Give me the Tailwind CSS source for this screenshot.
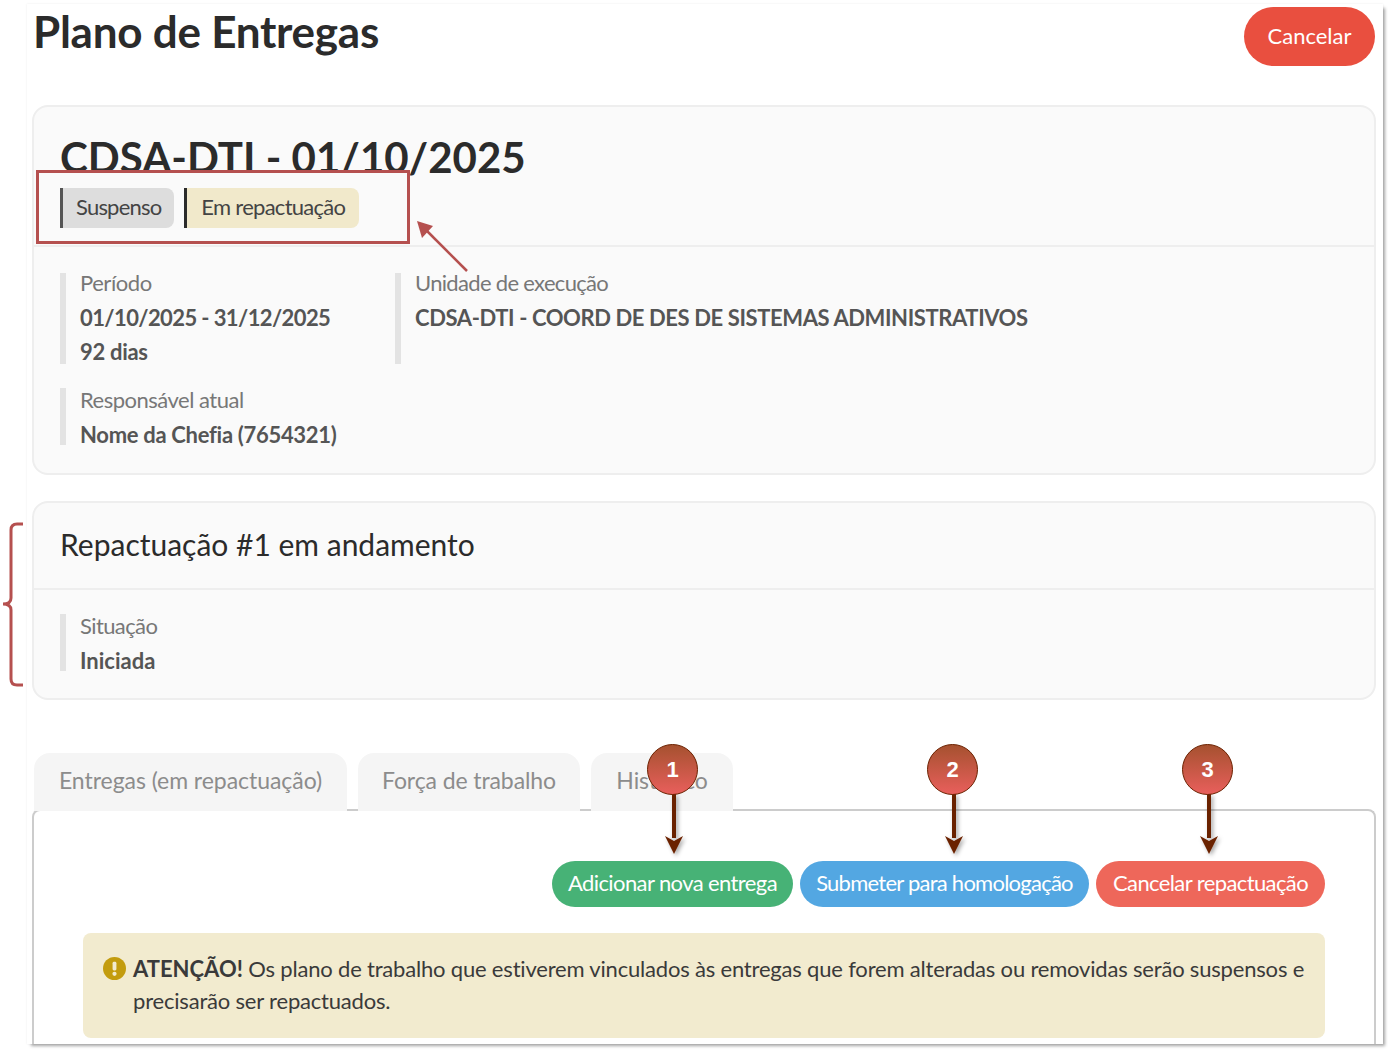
<!DOCTYPE html>
<html lang="pt-BR">

<head>
	<meta charset="UTF-8">
	<title>Plano de Entregas</title>
	<script src="https://cdn.jsdelivr.net/npm/@tailwindcss/browser@4"></script>
</head>

<body class="bg-white font-['Lato',sans-serif] text-[#2b2b2b] overflow-hidden">
	<div class="relative w-[1388px] h-[1050px]">
		<!-- page frame -->
		<div class="absolute left-[27px] top-[4px] w-[1356px] h-[1040px] bg-white overflow-hidden shadow-[3px_3px_3px_-1px_rgba(0,0,0,0.35),0_0_2px_rgba(0,0,0,0.08)] pl-[5px] pr-[7px]">
			<div class="flex justify-between h-[101px]">
				<h1 class="text-[44px] leading-[56px] font-bold tracking-[-0.25px] -mt-[1px] ml-[1px]">Plano de Entregas</h1>
				<button class="mt-[3px] mr-[1px] w-[131px] h-[59px] pb-[3px] rounded-full bg-[#e94f3f] text-white text-[22px]">Cancelar</button>
			</div>

			<!-- plano -->
			<section class="relative h-[370px] rounded-[16px] border-2 border-[#eeeeee] bg-[#fafafa]">
				<div class="relative h-[140px] border-b-2 border-[#eeeeee] px-[26px]">
					<h2 class="pt-[22px] text-[42px] leading-[56px] font-bold">CDSA-DTI - 01/10/2025</h2>
					<div class="absolute left-[2px] top-[63px] w-[374px] h-[74px] border-[3px] border-[#b5504f] bg-[#fafafa]"></div>
					<div class="relative flex gap-[10px] mt-[3px]">
						<span class="flex items-center h-[40px] pb-[4px] pl-[13px] pr-[13px] rounded-r-[8px] border-l-[3px] border-[#555555] bg-[#dddddd] text-[22px] tracking-[-0.8px] text-[#444444]">Suspenso</span>
						<span class="flex items-center h-[40px] pb-[4px] pl-[14px] pr-[14px] rounded-r-[8px] border-l-[3px] border-[#2b2b2b] bg-[#f1e9cb] text-[22px] tracking-[-0.72px] text-[#444444]">Em repactuação</span>
					</div>
				</div>
				<div class="px-[26px] pt-[26px]">
					<div class="flex">
						<div class="w-[335px] h-[91px] border-l-[6px] border-[#e3e3e3] pl-[14px]">
							<p class="-mt-[2px] text-[22px] leading-[23px] tracking-[-0.45px] text-[#777777]">Período</p>
							<p class="mt-[12px] text-[22px] leading-[23px] font-bold tracking-[-0.6px] text-[#555555]">01/10/2025 - 31/12/2025</p>
							<p class="mt-[11px] text-[22px] leading-[23px] font-bold tracking-[-0.3px] text-[#555555]">92 dias</p>
						</div>
						<div class="h-[91px] border-l-[6px] border-[#e3e3e3] pl-[14px]">
							<p class="-mt-[2px] text-[22px] leading-[23px] tracking-[-0.68px] text-[#777777]">Unidade de execução</p>
							<p class="mt-[12px] text-[22px] leading-[23px] font-bold tracking-[-0.4px] text-[#555555]">CDSA-DTI - COORD DE DES DE SISTEMAS ADMINISTRATIVOS</p>
						</div>
					</div>
					<div class="mt-[26px] h-[57px] border-l-[6px] border-[#e3e3e3] pl-[14px]">
						<p class="-mt-[2px] text-[22px] leading-[23px] tracking-[-0.5px] text-[#777777]">Responsável atual</p>
						<p class="mt-[12px] text-[22px] leading-[23px] font-bold tracking-[-0.3px] text-[#555555]">Nome da Chefia (7654321)</p>
					</div>
				</div>
			</section>

			<!-- repactuacao -->
			<section class="mt-[26px] h-[199px] rounded-[16px] border-2 border-[#eeeeee] bg-[#fafafa]">
				<div class="h-[87px] border-b-2 border-[#eeeeee] px-[26px] pb-[3px] flex items-center">
					<h3 class="text-[30px] leading-[40px]">Repactuação #1 em andamento</h3>
				</div>
				<div class="px-[26px] pt-[26px]">
					<div class="h-[57px] border-l-[6px] border-[#e3e3e3] pl-[14px]">
						<p class="-mt-[2px] text-[22px] leading-[23px] tracking-[-0.6px] text-[#777777]">Situação</p>
						<p class="mt-[12px] text-[22px] leading-[23px] font-bold text-[#555555]">Iniciada</p>
					</div>
				</div>
			</section>

			<!-- abas -->
			<div class="flex gap-[11px] mt-[53px] h-[58px] pl-[2px]">
				<div class="flex items-center justify-center w-[313px] pb-[3px] rounded-t-[16px] bg-[#f5f5f5] text-[23px] tracking-[-0.05px] text-[#8c8c8c]">Entregas (em repactuação)</div>
				<div class="flex items-center justify-center w-[222px] pb-[3px] rounded-t-[16px] bg-[#f5f5f5] text-[23px] tracking-[-0.1px] text-[#8c8c8c]">Força de trabalho</div>
				<div class="flex items-center justify-center w-[142px] pb-[3px] rounded-t-[16px] bg-[#f5f5f5] text-[23px] tracking-[-0.05px] text-[#8c8c8c]">Histórico</div>
			</div>
			<div class="-mt-[2px] h-[261px] rounded-t-[8px] border-2 border-b-0 border-[#cccccc] bg-white px-[49px] pt-[50px]">
				<div class="flex justify-end gap-[7px]">
					<button class="w-[241px] h-[46px] pb-[4px] rounded-full bg-[#47b276] text-white text-[22px] tracking-[-0.6px]">Adicionar nova entrega</button>
					<button class="w-[289px] h-[46px] pb-[4px] rounded-full bg-[#53a7e2] text-white text-[22px] tracking-[-0.75px]">Submeter para homologação</button>
					<button class="w-[229px] h-[46px] pb-[4px] rounded-full bg-[#ee675a] text-white text-[22px] tracking-[-0.6px]">Cancelar repactuação</button>
				</div>
				<div class="relative mt-[26px] h-[105px] rounded-[8px] bg-[#f2ebcf] pl-[50px] pr-[16px] pt-[20px] text-[22px] leading-[32px] tracking-[-0.19px] text-[#3a3a3a]">
					<svg class="absolute left-[20px] top-[24px] w-[23px] h-[23px]" viewBox="0 0 24 24">
						<circle cx="12" cy="12" r="12" fill="#c39c0e" />
						<rect x="10" y="5" width="4" height="9" rx="1.5" fill="#f2ebcf" />
						<circle cx="12" cy="17.5" r="2.2" fill="#f2ebcf" />
					</svg>
					<p><b class="font-bold tracking-normal">ATENÇÃO!</b> Os plano de trabalho que estiverem vinculados às entregas que forem alteradas ou removidas serão suspensos e precisarão ser repactuados.</p>
				</div>
			</div>
		</div>

		<!-- anotacoes -->
		<svg class="absolute left-0 top-0 w-[1388px] h-[1050px] pointer-events-none" viewBox="0 0 1388 1050" fill="none">
			<defs>
				<linearGradient id="badge" x1="0" y1="0" x2="0" y2="1">
					<stop offset="0" stop-color="#a5512f" />
					<stop offset="1" stop-color="#e95f5c" />
				</linearGradient>
				<filter id="sombra" x="-100%" y="-20%" width="300%" height="150%">
					<feDropShadow dx="2" dy="2" stdDeviation="2" flood-color="#000" flood-opacity="0.35" />
				</filter>
			</defs>
			<path d="M467 271 L425 229" stroke="#b5504f" stroke-width="2.5" />
			<path d="M417 221 L433 226 L422 238 Z" fill="#b5504f" />
			<path d="M23 524 H17 Q11 524 11 530 V598 Q11 604 3 604 Q11 604 11 610 V679 Q11 685 17 685 H23" stroke="#b5504f" stroke-width="3" />

			<g filter="url(#sombra)">
				<path d="M674 794 V838" stroke="#6b2100" stroke-width="4" />
				<path d="M665 836 L674 841 L683 836 L674 854 Z" fill="#6b2100" />
				<path d="M954 794 V838" stroke="#6b2100" stroke-width="4" />
				<path d="M945 836 L954 841 L963 836 L954 854 Z" fill="#6b2100" />
				<path d="M1209 794 V838" stroke="#6b2100" stroke-width="4" />
				<path d="M1200 836 L1209 841 L1218 836 L1209 854 Z" fill="#6b2100" />
			</g>
			<circle cx="672.500" cy="769.500" r="25" fill="url(#badge)" stroke="#6b2100" />
			<circle cx="952.500" cy="769.500" r="25" fill="url(#badge)" stroke="#6b2100" />
			<circle cx="1207.500" cy="769.500" r="25" fill="url(#badge)" stroke="#6b2100" />
			<g fill="#ffffff" font-family="Liberation Sans" font-weight="700" font-size="22" text-anchor="middle">
				<text x="672.500" y="777">1</text>
				<text x="952.500" y="777">2</text>
				<text x="1207.500" y="777">3</text>
			</g>
		</svg>
	</div>
</body>

</html>
